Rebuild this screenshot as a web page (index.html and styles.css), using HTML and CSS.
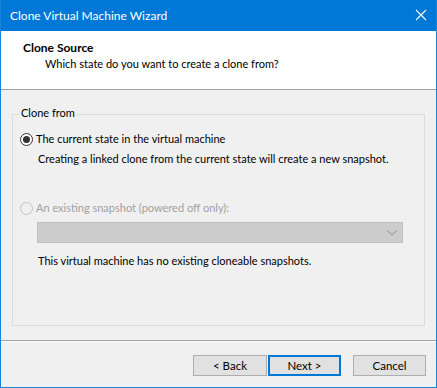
FILE: index.html
```html
<!DOCTYPE html>
<html lang="en">
<head>
    <meta charset="UTF-8">
    <title>Clone Virtual Machine Wizard</title>
    <link rel="stylesheet" href="styles.css">
</head>
<body>

<div class="window">

    <div class="titlebar">
        <span class="title">Clone Virtual Machine Wizard</span>
        <svg class="close" width="12" height="12" viewBox="0 0 12 12">
            <path d="M1 1 L11 11 M11 1 L1 11" stroke="#fff" stroke-width="1.1" fill="none"/>
        </svg>
    </div>

    <div class="header">
        <div class="heading">Clone Source</div>
        <div class="subheading">Which state do you want to create a clone from?</div>
    </div>

    <div class="content">
        <fieldset class="group">
            <legend>Clone from</legend>

            <label class="radio">
                <span class="dot checked"></span>
                <span>The current state in the virtual machine</span>
            </label>
            <div class="note first">Creating a linked clone from the current state will create a new snapshot.</div>

            <label class="radio disabled">
                <span class="dot"></span>
                <span>An existing snapshot (powered off only):</span>
            </label>
            <div class="combo">
                <svg width="10" height="6" viewBox="0 0 10 6">
                    <path d="M0.5 0.5 L5 5 L9.5 0.5" stroke="#a3a3a3" stroke-width="1.2" fill="none"/>
                </svg>
            </div>
            <div class="note">This virtual machine has no existing cloneable snapshots.</div>
        </fieldset>
    </div>

    <div class="footer">
        <button class="btn">&lt; Back</button>
        <button class="btn default">Next &gt;</button>
        <button class="btn cancel">Cancel</button>
    </div>

</div>

</body>
</html>
```

FILE: styles.css
```css
*{
    margin:0;
    padding:0;
    box-sizing:border-box;
}

html{
    font-family: Lato, 'Open Sans', sans-serif;
    font-size:11px;
    --accent:#0078d7;
    --frame:#1883d7;
    --face:#f0f0f0;
    --line:#dcdcdc;
}

body{
    width:437px;
    height:388px;
    background:var(--face);
}

.window{
    width:437px;
    height:388px;
    display:flex;
    flex-direction:column;
    border:1px solid var(--frame);
    border-top:none;
    background:var(--face);
    white-space:nowrap;
}

.titlebar{
    height:31px;
    background:var(--accent);
    color:#fff;
    font-size:12px;
    display:flex;
    align-items:center;
    justify-content:space-between;
    padding:0 9px 1px 9px;
}

.header{
    height:59px;
    background:#fff;
    border-bottom:1px solid #a0a0a0;
    padding:9px 0 0 22px;
    line-height:16px;
}

.heading{ font-weight:bold; font-size:12px; color:#000; }
.subheading{ padding-left:22px; color:#000; }

.content{
    flex:1;
    padding:15px 11px 0 11px;
    border-bottom:1px solid #a0a0a0;
}

.group{
    height:221px;
    border:1px solid var(--line);
    padding:6px 7px 0 7px;
    line-height:16px;
}

.group legend{ padding:0 2px 3px 1px; }

.radio{
    display:flex;
    align-items:center;
    gap:3px;
    margin-top:1px;
}

.dot{
    width:13px;
    height:13px;
    border:1px solid #333;
    border-radius:50%;
    background:#fff;
    display:flex;
    align-items:center;
    justify-content:center;
}

.dot.checked:after{
    content:"";
    width:7px;
    height:7px;
    border-radius:50%;
    background:#333;
}

.disabled{ color:#a0a0a0; margin-top:33px; }
.disabled .dot{ border-color:#c4c4c4; background:var(--face); }

.note{ padding-left:18px; margin-top:5px; }
.note.first{ margin-top:4px; }

.combo{
    margin:6px 0 0 17px;
    width:366px;
    height:21px;
    background:#cccccc;
    border:1px solid #bfbfbf;
    display:flex;
    align-items:center;
    justify-content:flex-end;
    padding-right:5px;
}

.combo + .note{ margin-top:10px; }

.footer{
    height:46px;
    border-top:1px solid #fff;
    display:flex;
    justify-content:flex-end;
    align-items:flex-start;
    padding:13px 10px 0 0;
}

.btn{
    font-family:inherit;
    font-size:11.5px;
    width:74px;
    height:21px;
    background:#e1e1e1;
    border:1px solid #adadad;
    color:#000;
}

.btn.default{
    margin-left:1px;
    width:73px;
    border:2px solid var(--accent);
}

.btn.cancel{ margin-left:12px; width:73px; }
```
